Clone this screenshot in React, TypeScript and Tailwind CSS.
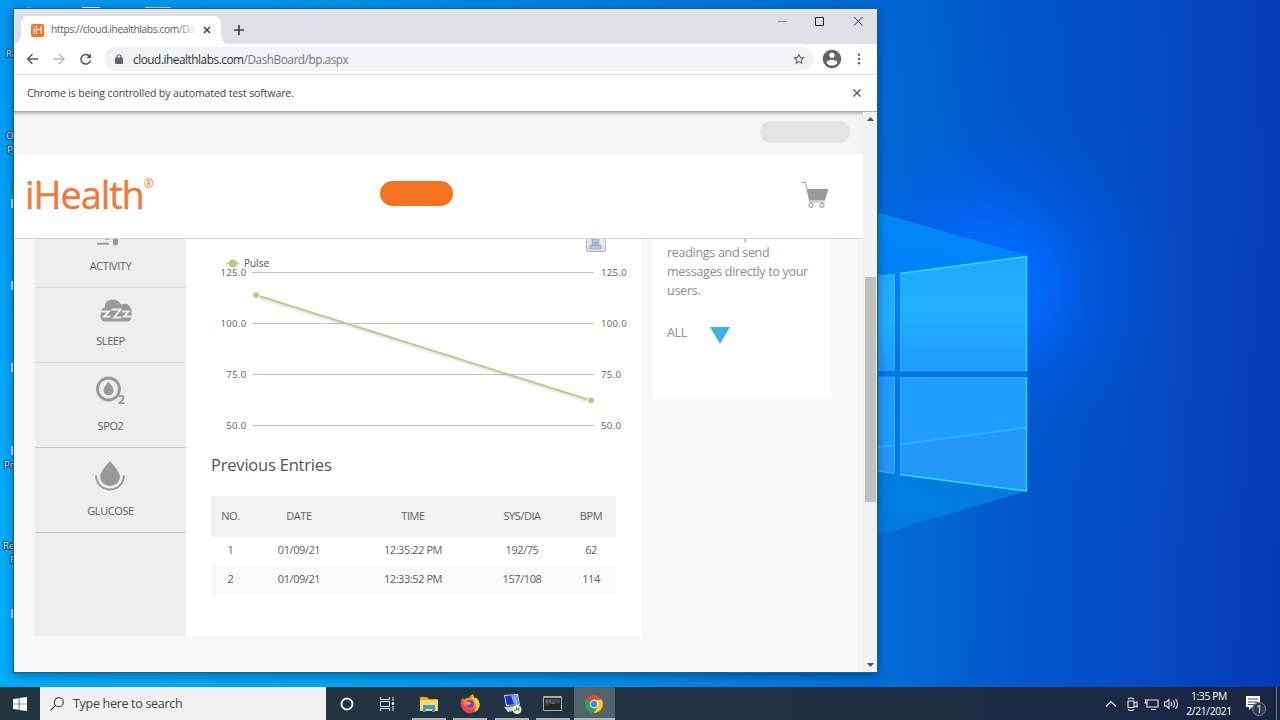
import type { ReactNode } from 'react';

function Wallpaper() {
  return (
    <svg className="absolute inset-0" width="1280" height="720" viewBox="0 0 1280 720">
      <defs>
        <linearGradient id="base" gradientUnits="userSpaceOnUse" x1="0" y1="500" x2="1280" y2="520">
          <stop offset="0" stopColor="#00adfd" />
          <stop offset="0.25" stopColor="#00a6f4" />
          <stop offset="0.5" stopColor="#008ae4" />
          <stop offset="0.68" stopColor="#0070d8" />
          <stop offset="0.78" stopColor="#025ace" />
          <stop offset="0.88" stopColor="#044cc6" />
          <stop offset="1" stopColor="#033bb6" />
        </linearGradient>
        <linearGradient id="topShade" x1="0" y1="0" x2="0" y2="1">
          <stop offset="0" stopColor="#0048c4" stopOpacity="0.22" />
          <stop offset="0.4" stopColor="#0050cc" stopOpacity="0.1" />
          <stop offset="0.8" stopColor="#0058d8" stopOpacity="0" />
        </linearGradient>
        <radialGradient id="glow" gradientUnits="userSpaceOnUse" cx="0" cy="0" r="1" gradientTransform="translate(985 285) scale(190 175)">
          <stop offset="0" stopColor="#0072ff" />
          <stop offset="0.3" stopColor="#006aff" stopOpacity="0.9" />
          <stop offset="0.6" stopColor="#0060f0" stopOpacity="0.4" />
          <stop offset="1" stopColor="#005ce0" stopOpacity="0" />
        </radialGradient>
        <linearGradient id="beam" x1="0" y1="0" x2="0" y2="1">
          <stop offset="0" stopColor="#0090ff" />
          <stop offset="0.5" stopColor="#0078e8" />
          <stop offset="0.9" stopColor="#0082e2" />
          <stop offset="1" stopColor="#007cdc" />
        </linearGradient>
        <linearGradient id="pane" x1="0" y1="0" x2="0" y2="1">
          <stop offset="0" stopColor="#22a8ff" />
          <stop offset="0.45" stopColor="#21b0ff" />
          <stop offset="1" stopColor="#1e9bff" />
        </linearGradient>
      </defs>
      <rect width="1280" height="720" fill="url(#base)" />
      <rect width="1280" height="720" fill="url(#topShade)" />
      <rect x="780" y="80" width="430" height="420" fill="url(#glow)" />
      <path d="M860 208 L1027 256 V491 L860 540 Z" fill="url(#beam)" fillOpacity="0.85" />
      <path d="M860 208 L1027 256" stroke="#1d9cff" strokeOpacity="0.5" fill="none" />
      <path d="M860 278 L895 274 V371 H860 Z" fill="url(#pane)" />
      <path d="M900 273 L1027 256 V371 H900 Z" fill="url(#pane)" />
      <path d="M860 377 H895 V474 L860 469 Z" fill="#209dff" />
      <path d="M900 377 H1027 V491 L900 474.500 Z" fill="#1f9eff" />
      <path d="M900 445 L1027 427 V491 L900 474.500 Z M860 450 L895 446 V474 L860 469 Z" fill="#2498f8" />
      <path d="M860 449 L895 445.500 M900 444.500 L1027 427.500" stroke="#22b8ff" strokeWidth="1.500" />
      <path d="M860 278 L894.500 274 V371 M860 377 H894.500 V473.500 L860 469 M900.500 371 V273.500 M900 371 H1026 M900 377.500 H1026 M900.500 377 V474" stroke="#38b4ff" strokeOpacity="0.7" fill="none" />
      <path d="M900 273.500 L1026.500 256.500 V371 M1026.500 377 V491 L900 474.500" stroke="#2ed8ff" strokeWidth="1.500" fill="none" />
      <g fill="#e9f6ff">
        <path d="M82 7h18v2h-18z" />
        <path d="M145 7h26v2h-26z" fill="#cfd79a" />
        <path d="M26 7.500h5v1h-5z" fill="#8fc4e8" />
        <path d="M11 199h3v9h-3zM11 281h3v9h-3zM11 363h3v9h-3zM11 446h3v9h-3zM11 609h3v9h-3z" fill="#c5e2f2" />
      </g>
      <ellipse cx="15" cy="188" rx="4" ry="9" fill="#1d9f4a" />
      <g fill="#fff" fontFamily="Open Sans, sans-serif" fontSize="9.500" stroke="#0b3a66" strokeWidth="1.600" paintOrder="stroke">
        <text x="6" y="57">Re</text>
        <text x="6" y="139">O</text>
        <text x="7" y="153">P</text>
        <text x="4" y="468">Po</text>
        <text x="3" y="549">Re</text>
        <text x="10" y="563">F</text>
      </g>
    </svg>
  );
}

function TabStrip() {
  return (
    <div className="flex h-[35px] shrink-0 items-end bg-[#dee1e6]">
      <svg width="7" height="28" viewBox="0 0 7 28" className="shrink-0"><path d="M7 20v8H0q6-1 7-8z" fill="#fff" /></svg>
      <div className="flex h-7 w-[200px] items-center rounded-t-[7px] bg-white pl-[10px]">
        <div className="grid h-[13px] w-[13px] shrink-0 place-items-center rounded-[2px] bg-[#f0762b] text-[10.500px] font-normal leading-none tracking-[-0.500px] text-white">iH</div>
        <div className="relative ml-[7px] w-[146px] overflow-hidden whitespace-nowrap text-[10.200px] tracking-[-0.370px] text-[#5a5e63]">
          https://cloud.ihealthlabs.com/Das
          <div className="absolute inset-y-0 right-0 w-5 bg-gradient-to-r from-white/0 to-white" />
        </div>
        <svg className="ml-[6px] shrink-0" width="8" height="8" viewBox="0 0 8 8"><path d="M1 1l6 6M7 1L1 7" stroke="#3c4043" strokeWidth="1.500" /></svg>
      </div>
      <svg width="7" height="28" viewBox="0 0 7 28" className="shrink-0"><path d="M0 20v8h7q-6-1-7-8z" fill="#fff" /></svg>
      <svg className="mb-[8px] ml-[5px]" width="12" height="12" viewBox="0 0 12 12"><path d="M6 1v10M1 6h10" stroke="#3c4043" strokeWidth="1.600" /></svg>
      <svg className="mb-[17px] ml-auto mr-[12px]" width="88" height="12" viewBox="0 0 88 12" fill="none">
        <path d="M1 6.500h9" stroke="#8c8f94" />
        <path d="M38.500 2.500h8v8h-8z" stroke="#222" />
        <path d="M77 2l8.500 8.500M85.500 2L77 10.500" stroke="#333" />
      </svg>
    </div>
  );
}

function Toolbar() {
  return (
    <div className="flex h-[31px] shrink-0 items-center border-b border-[#dcdde0] bg-white pl-[12px]">
      <svg width="68" height="14" viewBox="0 0 68 14" fill="none" strokeWidth="1.400">
        <path d="M12 7H1.500M6.500 2L1.500 7l5 5" stroke="#55595e" />
        <path d="M27.500 7H38M33 2l5 5-5 5" stroke="#b4b7ba" />
        <path d="M63.600 4.400A4.800 4.800 0 1 0 64.400 8.500" stroke="#55595e" strokeWidth="1.500" />
        <path d="M65 1.500v4.800h-4.800z" fill="#55595e" />
      </svg>
      <div className="ml-[10px] flex h-6 w-[710px] items-center rounded-full bg-[#f1f3f4] pl-[11px] pr-[8px]">
        <svg width="8" height="10" viewBox="0 0 8 10" className="shrink-0"><rect y="3.600" width="8" height="6.400" rx="1" fill="#5f6368" /><path d="M2 4V2.800a2 2 0 0 1 4 0V4" stroke="#5f6368" strokeWidth="1.100" fill="none" /></svg>
        <div className="ml-[10px] mt-px whitespace-nowrap text-[11.800px] tracking-[-0.460px] text-[#74787c]"><span className="text-[#303134]">cloud.ihealthlabs.com</span>/DashBoard/bp.aspx</div>
        <svg className="ml-auto shrink-0" width="14" height="14" viewBox="0 0 24 24" fill="#54585d"><path d="M22 9.240l-7.190-.620L12 2 9.190 8.630 2 9.240l5.460 4.730L5.820 21 12 17.270 18.180 21l-1.630-7.030L22 9.240zM12 15.400l-3.760 2.270 1-4.280-3.320-2.880 4.380-.380L12 6.100l1.710 4.040 4.380.380-3.320 2.880 1 4.280L12 15.400z" /></svg>
      </div>
      <svg className="ml-[7px]" width="22" height="22" viewBox="0 0 24 24" fill="#5f6368"><path d="M12 2C6.480 2 2 6.480 2 12s4.480 10 10 10 10-4.480 10-10S17.520 2 12 2zm0 3c1.660 0 3 1.340 3 3s-1.340 3-3 3-3-1.340-3-3 1.340-3 3-3zm0 14.200c-2.500 0-4.710-1.280-6-3.220.030-1.990 4-3.080 6-3.080 1.990 0 5.970 1.090 6 3.080-1.290 1.940-3.500 3.220-6 3.220z" /></svg>
      <svg className="ml-[14px]" width="4" height="12" viewBox="0 0 4 12" fill="#5f6368"><circle cx="2" cy="1.700" r="1.250" /><circle cx="2" cy="6" r="1.250" /><circle cx="2" cy="10.300" r="1.250" /></svg>
    </div>
  );
}

function Cart() {
  return (
    <svg width="28" height="28" viewBox="0 0 28 28" fill="none" stroke="#a6a6a6">
      <path d="M0 1.500h4.500L9 21.500M8.500 21h15.500" strokeWidth="1.100" />
      <path d="M6 8H27.500l-3.600 11.500H8.500z" fill="#999" stroke="none" />
      <circle cx="10" cy="24.300" r="2" strokeWidth="1.200" /><circle cx="21" cy="24.300" r="2" strokeWidth="1.200" />
    </svg>
  );
}

const caps = 'text-[11px] leading-[14px] tracking-[-0.43px] text-[#606060]';

function SideItem({ label, icon, className }: { label: string; icon: ReactNode; className: string }) {
  return (
    <div className={`flex flex-col items-center justify-between border-b pb-[14px] ${className}`}>
      {icon}
      <div className={caps}>{label}</div>
    </div>
  );
}

function Sidebar() {
  return (
    <div className="h-[397px] w-[151px] bg-[#eee]">
      <SideItem label="ACTIVITY" className="h-[48.500px] border-[#ddd]" icon={
        <svg width="22" height="7" viewBox="0 0 22 7" fill="#999" className="mr-[6px]"><path d="M0 3.800h12v2H0zM16 0h5v4a2.500 2.500 0 0 1-5 0zM8 0h4v.8H8z" /></svg>} />
      <SideItem label="SLEEP" className="h-[75.500px] border-[#ddd] pt-[11px]" icon={
        <svg width="32" height="23" viewBox="0 0 32 23" className="ml-[10px]">
          <path d="M1 14V11.500Q2 9 4.500 8.500Q5 1 12 0.500Q18 0 21 5.500Q27 3 30 8Q32 10 31.500 14Q33 22 27 22.500H5Q0 22 0.500 16Z" fill="#999" />
          <g stroke="#eee" strokeWidth="1.900" fill="none"><path d="M0 12.500h9l-5 5h6.500M11.500 10.500h9l-6.500 8h7.500M22 12.500h6.500l-4.500 5H32" /></g>
        </svg>} />
      <SideItem label="SPO2" className="h-[85px] border-[#c8c8c8] pt-[12px]" icon={
        <svg width="34" height="34" viewBox="0 0 34 34" className="ml-[5px]">
          <circle cx="12.500" cy="14" r="11" fill="none" stroke="#999" strokeWidth="2.800" />
          <path d="M12.500 6.500Q17.500 12.500 17.500 15.500a5 5 0 0 1-10 0Q7.500 12.500 12.500 6.500z" fill="#999" />
          <text x="22" y="29" fontSize="12" fontWeight="700" fill="#999">2</text>
        </svg>} />
      <SideItem label="GLUCOSE" className="h-[85px] border-[#c8c8c8] pt-[12px]" icon={
        <svg width="30" height="32" viewBox="0 0 30 32" className="mr-[2px]">
          <path d="M15 1Q25 12 25 16.500a10 9.500 0 0 1-20 0Q5 12 15 1z" fill="#999" />
          <path d="M1 15.500A14 14 0 0 0 29 15.500" fill="none" stroke="#999" strokeWidth="2" />
        </svg>} />
    </div>
  );
}

const ticks = [
  { y: 33.5, label: '125.0' },
  { y: 84.5, label: '100.0' },
  { y: 135.5, label: '75.0' },
  { y: 186.5, label: '50.0' },
];

function PulseChart() {
  return (
    <svg width="455" height="200" viewBox="0 0 455 200" className="block shrink-0">
      <defs><linearGradient id="btn" x1="0" y1="0" x2="0" y2="1"><stop offset="0" stopColor="#f4f4f4" /><stop offset="1" stopColor="#dedede" /></linearGradient></defs>
      <rect x="400.500" y="-8" width="19" height="20.500" rx="2" fill="url(#btn)" stroke="#b5b5b5" />
      <path d="M406 0h7v4h-7zM406.500 3.500h6v3h-6zM404 6h11v4h-11z" fill="#b4cbe2" stroke="#8ca3b9" strokeWidth="0.700" />
      {ticks.map(t => (
        <g key={t.label} fontSize="9.600" fill="#606060" letterSpacing="0.300">
          <path d={`M66 ${t.y}H408`} stroke="#c2c2c2" />
          <text x="60.500" y={t.y + 3.5} textAnchor="end">{t.label}</text>
          <text x="415" y={t.y + 3.5}>{t.label}</text>
        </g>
      ))}
      <path d="M40.500 24.500h13" stroke="#bbce8f" strokeWidth="1.500" />
      <circle cx="47" cy="24.500" r="4" fill="#b8cc8a" />
      <text x="58" y="28" fontSize="11" fill="#3e576f" textLength="25" lengthAdjust="spacingAndGlyphs">Pulse</text>
      <path d="M71 57.500L405 162.500" stroke="#000" strokeOpacity="0.070" strokeWidth="4" />
      <path d="M70 56L405 161.500" stroke="#bccb92" strokeWidth="2" />
      <circle cx="70" cy="56" r="3.500" fill="#b5cc83" stroke="#fff" />
      <circle cx="405" cy="161.500" r="3.500" fill="#b5cc83" stroke="#fff" />
    </svg>
  );
}

const cols = 'grid grid-cols-[39px_98px_130px_88px_50px] items-center text-center';
const entries = [
  ['1', '01/09/21', '12:35:22 PM', '192/75', '62'],
  ['2', '01/09/21', '12:33:52 PM', '157/108', '114'],
];

function Entries() {
  return (
    <div className={`mt-[19px] w-[405px] ${caps}`}>
      <div className={`${cols} h-[41px] bg-[#f2f2f2] pb-[2px]`}>
        {['NO.', 'DATE', 'TIME', 'SYS/DIA', 'BPM'].map(h => <div key={h}>{h}</div>)}
      </div>
      {entries.map((r, i) => (
        <div key={r[0]} className={`${cols} h-[28.500px] pb-[2px] ${i ? 'bg-[#f9f9f9]' : 'bg-white'}`}>
          {r.map(c => <div key={c}>{c}</div>)}
        </div>
      ))}
    </div>
  );
}

function Page() {
  return (
    <div className="flex w-[849px] flex-col bg-[#f8f8f8]">
      <div className="flex h-[42px] shrink-0 items-center justify-end bg-[#f5f5f5] pb-[2px] pr-[13px] shadow-[inset_0_3px_3px_-1px_#bbb]">
        <div className="h-[22px] w-[90px] rounded-full bg-[#e4e4e4]" />
      </div>
      <div className="flex h-[85px] shrink-0 items-start border-b border-[#d3d3d3] bg-white">
        <div className="ml-[11px] mt-[12px] flex h-[56px] w-[130px] items-start text-[#f0793c]">
          <span className="text-[38px] leading-[56px] tracking-[-1.100px] [-webkit-text-stroke:0.4px_#f0793c]">iHealth</span>
          <span className="mt-[9px] text-[12px] leading-[18px]">®</span>
        </div>
        <div className="ml-[225px] mt-[26.500px] h-[25px] w-[73px] rounded-full bg-[#f57320]" />
        <div className="ml-auto mr-[34px] mt-[27px]"><Cart /></div>
      </div>
      <div className="flex min-h-0 flex-1 items-start pl-[21px]">
        <Sidebar />
        <div className="h-[397px] w-[455px] bg-white">
          <PulseChart />
          <div className="pl-[25px]">
            <h2 className="mt-[14px] text-[16.500px] leading-6 tracking-[-0.200px] text-[#555]">Previous Entries</h2>
            <Entries />
          </div>
        </div>
        <div className="ml-[12px] h-[160px] w-[178px] overflow-hidden bg-white pl-[14px] text-[12.600px] leading-[18.800px] tracking-[-0.340px] text-[#8e8e8e]">
          <p className="-mt-[13.500px] h-[75px] whitespace-pre-line">{'view and compare\nreadings and send\nmessages directly to your\nusers.'}</p>
          <div className="mt-[22.500px] flex items-center">
            <span className="w-[21px]">ALL</span>
            <svg className="ml-[21.500px] mt-[4px]" width="20" height="17" viewBox="0 0 20 17"><path d="M0 0h20L10 17z" fill="#41b3e8" /></svg>
          </div>
        </div>
      </div>
    </div>
  );
}

function Scrollbar() {
  return (
    <div className="flex flex-1 flex-col items-center justify-between bg-[#f1f1f1] py-[5px]">
      <svg width="7" height="4" viewBox="0 0 7 4"><path d="M0 4h7L3.500 0z" fill="#505050" /></svg>
      <div className="mb-auto mt-[156px] h-[225px] w-[11px] bg-[#c1c1c1]" />
      <svg width="7" height="4" viewBox="0 0 7 4"><path d="M0 0h7L3.500 4z" fill="#505050" /></svg>
    </div>
  );
}

function BrowserWindow() {
  return (
    <div className="absolute left-[14px] top-[9px] flex h-[663px] w-[863px] flex-col overflow-hidden shadow-[0_0_0_1px_#17608f,0_3px_10px_rgba(0,20,60,0.5)]">
      <TabStrip />
      <Toolbar />
      <div className="flex h-[37px] shrink-0 items-center justify-between border-b border-[#aaa] bg-white pl-[13px] pr-[16px] text-[10.600px] tracking-[-0.150px] text-[#404347]">
        <span className="pt-[2px]">Chrome is being controlled by automated test software.</span>
        <svg width="8" height="8" viewBox="0 0 8 8"><path d="M.5.5l7 7M7.500.5l-7 7" stroke="#5f6368" strokeWidth="1.500" /></svg>
      </div>
      <div className="flex min-h-0 flex-1"><Page /><Scrollbar /></div>
    </div>
  );
}

function Task({ children, line = true, active = false }: { children: ReactNode; line?: boolean; active?: boolean }) {
  return (
    <div className={`flex h-full w-[41.250px] flex-col items-center ${active ? 'bg-[#52636e]' : ''}`}>
      <div className="grid flex-1 place-items-center pt-[2px]">{children}</div>
      <div className={`h-[2px] ${active ? 'w-full' : 'w-[34px]'} ${line ? 'bg-[#b3b3b3]' : ''}`} />
    </div>
  );
}

function Taskbar() {
  return (
    <div className="absolute inset-x-0 bottom-0 flex h-[33px] items-center bg-gradient-to-r from-[#21353f] via-[#203342] to-[#192544]">
      <div className="grid w-10 place-items-center">
        <svg width="14" height="14" viewBox="0 0 14 14" fill="#fff"><path d="M0 2l5.800-.8v5.500H0zM6.400 1.100L14 0v6.700H6.400zM0 7.300h5.800v5.500L0 12zM6.400 7.300H14V14l-7.600-1.100z" /></svg>
      </div>
      <div className="flex h-full w-[286px] items-center bg-[#f1f1f1] pl-[10px]">
        <svg width="14" height="14" viewBox="0 0 14 14" fill="none" stroke="#333" strokeWidth="1.100"><circle cx="8.800" cy="5.200" r="4.500" /><path d="M5.600 8.400L.5 13.500" /></svg>
        <span className="ml-[9px] pt-[2px] text-[12.500px] tracking-[-0.300px] text-[#404040]">Type here to search</span>
      </div>
      <div className="flex h-full">
        <Task line={false}><svg width="14" height="14" viewBox="0 0 14 14"><circle cx="7" cy="7" r="5.500" fill="none" stroke="#f2f5f6" strokeWidth="1.900" /></svg></Task>
        <Task line={false}>
          <svg width="15" height="14" viewBox="0 0 15 14" fill="none" stroke="#dfe4e6"><path d="M.5 0v2.500h9V0M.5 4.500h9v5h-9zM.5 14v-2.500h9V14M13 0v4M13 9v5" /><circle cx="13" cy="6.500" r="1" fill="#fff" /></svg>
        </Task>
        <Task>
          <svg width="18" height="16" viewBox="0 0 18 16"><path d="M0 1h7l2 2h9v12H0z" fill="#e6a817" /><path d="M0 4h18v11H0z" fill="#ffd968" /><path d="M3 9h12v7h-3v-3H6v3H3z" fill="#3f9dd4" /></svg>
        </Task>
        <Task>
          <svg width="20" height="20" viewBox="0 0 20 20">
            <path d="M1 11Q0 7 3 4L4 6Q6 3 9 4Q10 1 13 0Q13 3 15 4.500L16 3.500Q20 7 19.500 12A9.500 8.500 0 0 1 1 11z" fill="#ff8a24" />
            <path d="M13 0Q13 3 15 4.500L16 3.500Q20 7 19.500 12Q18 17 14 18.500Q18 12 14 7Q11 5 13 0z" fill="#ffce3a" />
            <path d="M1 11Q0 7 3 4Q2 11 8 14Q13 16 16 12Q15 19 10 19.500Q3 19 1 11z" fill="#f5405c" />
            <circle cx="10" cy="10" r="4" fill="#7547c2" /><path d="M5 8q4-1 6 1-1 2-4 2-2-1-2-3z" fill="#ff9c2b" />
          </svg>
        </Task>
        <Task>
          <svg width="20" height="20" viewBox="0 0 20 20"><path d="M2 1l14-1 2 11-14 1z" fill="#c8d2df" /><path d="M3 2l12-1 2 9-12 1z" fill="#1334c4" /><path d="M9 1.500l6-.5 2 9-5 .5z" fill="#7fa4ee" /><path d="M2 13l11-1 3 4-10 2z" fill="#c9cdd1" /><circle cx="15" cy="15.500" r="4.500" fill="#e6eee3" /><path d="M12.500 17l2.500-2-1-1.500M17.500 13.500l-1.500 1.800 1 1.500" stroke="#3d8b40" fill="none" strokeWidth="1.100" /></svg>
        </Task>
        <Task>
          <svg width="19" height="15" viewBox="0 0 19 15"><rect width="19" height="15" rx="1" fill="#a7adb1" /><rect x="1" y="2" width="17" height="12" fill="#24272a" /><path d="M2 3h15v4L2 9z" fill="#44484c" /><path d="M3 4.500h2M3 6.500h2M7 4v3M9 7h3" stroke="#999" strokeWidth="0.700" /></svg>
        </Task>
        <Task active>
          <svg width="18" height="18" viewBox="0 0 18 18"><circle cx="9" cy="9" r="9" fill="#e74436" /><path d="M1.200 4.500A9 9 0 0 0 9 18l4-7z" fill="#2da44e" /><path d="M16.800 4.800A9 9 0 0 1 9 18L13 10.500 9 4.800z" fill="#fbcb1f" /><circle cx="9" cy="9" r="4.300" fill="#fff" /><circle cx="9" cy="9" r="3.300" fill="#4485ec" /></svg>
        </Task>
      </div>
      <svg className="ml-auto" width="74" height="14" viewBox="0 0 74 14" fill="none" stroke="#e8ebef" strokeWidth="1.100">
        <path d="M1 9.500l5-5 5 5" />
        <path d="M23 4h6v6.500h-6zM29 6l3-1v5l-3-1M23 2q3-2 6 0M23 12.500q3 2 6 0" />
        <path d="M42 3h11v7H42zM40.500 2v4M39.500 6h3M46 12.500h5" />
        <path d="M59.500 5h2l2.500-2.500v9L61.500 9h-2zM66 5q1.500 2 0 4M68.200 3.500q2.800 3.500 0 7M70.500 2q4 5 0 10" />
      </svg>
      <div className="ml-[4px] w-[52px] text-center text-[10.300px] leading-[15px] tracking-[-0.350px] text-white">
        <div>1:35 PM</div>
        <div>2/21/2021</div>
      </div>
      <svg className="ml-[10px] mr-[9px] mt-[2px]" width="22" height="24" viewBox="0 0 22 24">
        <path d="M1 3h14v11H7l-3 3v-3H1z" fill="#fff" /><path d="M3 6h10M3 9h10M3 11.500h6" stroke="#44506a" />
        <circle cx="14" cy="16" r="6.500" fill="#313b4f" stroke="#76808f" /><text x="14" y="19.500" textAnchor="middle" fill="#fff" fontSize="10">1</text>
      </svg>
      <div className="mr-[3px] h-full w-px bg-[#6b7486]" />
    </div>
  );
}

export default function App() {
  return (
    <div className="relative h-[720px] w-[1280px] overflow-hidden font-['Open_Sans','Noto_Sans',sans-serif]">
      <Wallpaper />
      <BrowserWindow />
      <Taskbar />
    </div>
  );
}
